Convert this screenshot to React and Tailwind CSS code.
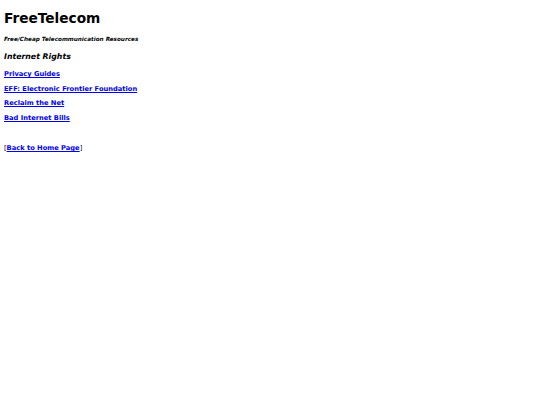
const links = [
  "Privacy Guides",
  "EFF: Electronic Frontier Foundation",
  "Reclaim the Net",
  "Bad Internet Bills",
];

export default function App() {
  return (
    <div className="min-h-[405px] bg-white px-[4px] pt-[10px] text-black font-['DejaVu_Sans',Verdana,sans-serif]">
      <h1 className="text-[13.7px] font-bold leading-[16px]">FreeTelecom</h1>
      <p className="mt-[8.7px] text-[5.7px] font-bold italic leading-[8px]">
        Free/Cheap Telecommunication Resources
      </p>
      <h2 className="mt-[9.3px] text-[7.8px] font-bold italic leading-[10px]">
        Internet Rights
      </h2>
      <div className="mt-[5px] flex flex-col items-start">
        {links.map((l) => (
          <a
            key={l}
            href="#"
            className="text-[6.7px] font-bold leading-[14.7px] text-[#0000ee] underline"
          >
            {l}
          </a>
        ))}
      </div>
      <p className="mt-[15.7px] text-[6.7px] font-bold leading-[14.7px]">
        <span className="font-normal">[</span>
        <a href="#" className="text-[#0000ee] underline">
          Back to Home Page
        </a>
        <span className="font-normal">]</span>
      </p>
    </div>
  );
}
